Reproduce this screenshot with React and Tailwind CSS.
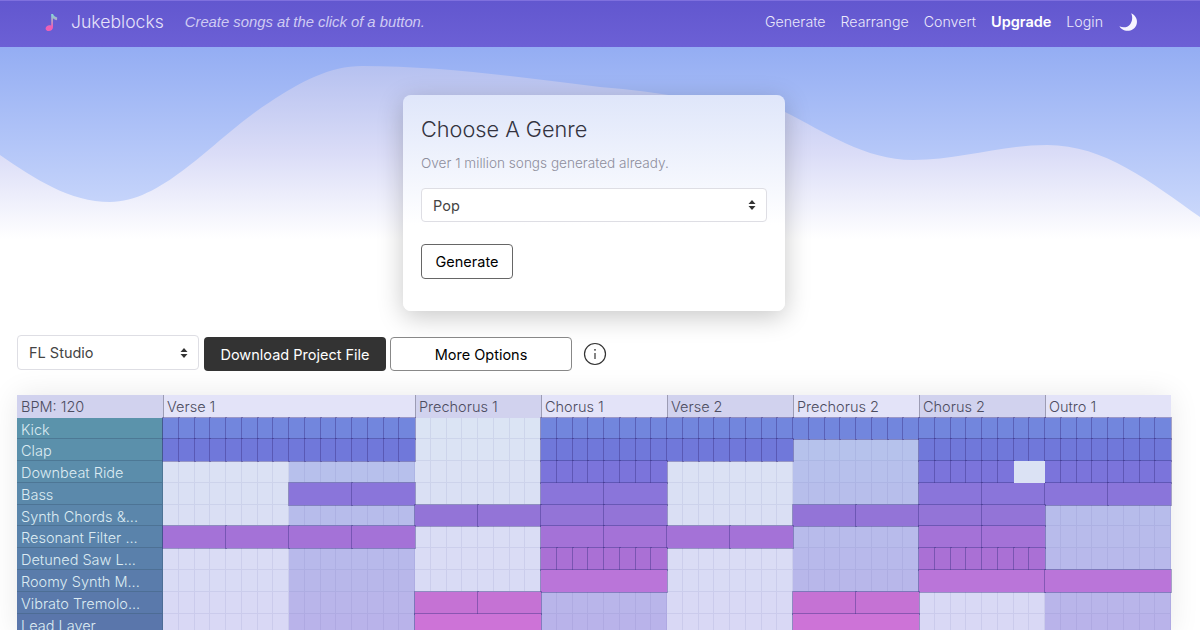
const SECTIONS = [
  { name: 'Verse 1', width: 'w-[252px]' },
  { name: 'Prechorus 1', width: 'w-[126px]' },
  { name: 'Chorus 1', width: 'w-[126px]' },
  { name: 'Verse 2', width: 'w-[126px]' },
  { name: 'Prechorus 2', width: 'w-[126px]' },
  { name: 'Chorus 2', width: 'w-[126px]' },
  { name: 'Outro 1', width: 'w-[126px]' },
]

// blocks: verse 1 a, verse 1 b, prechorus 1, chorus 1, verse 2, prechorus 2, chorus 2, outro 1
// number = active notes in the block, l = empty light, d = empty dark, g = 8 steps with last two empty
const TRACKS = [
  { name: 'Kick', color: '#7286dd', blocks: [8, 8, 'l', 8, 8, 8, 8, 8] },
  { name: 'Clap', color: '#7078da', blocks: [8, 8, 'l', 8, 8, 'd', 8, 8] },
  { name: 'Downbeat Ride', color: '#7b74db', blocks: ['l', 'd', 'l', 8, 'l', 'd', 'g', 8] },
  { name: 'Bass', color: '#8a75da', blocks: ['l', 2, 'l', 2, 'l', 'd', 2, 2] },
  { name: 'Synth Chords &...', color: '#9374d7', blocks: ['l', 'd', 2, 2, 'l', 2, 2, 'd'] },
  { name: 'Resonant Filter ...', color: '#a472d7', blocks: [2, 2, 'l', 2, 2, 'd', 2, 'd'] },
  { name: 'Detuned Saw L...', color: '#aa70d5', blocks: ['l', 'd', 'l', 8, 'l', 'd', 8, 'd'] },
  { name: 'Roomy Synth M...', color: '#ba75d9', blocks: ['l', 'd', 'l', 1, 'l', 'd', 1, 1] },
  { name: 'Vibrato Tremolo...', color: '#c572d4', blocks: ['l', 'd', 2, 'd', 'l', 2, 'l', 'd'] },
  { name: 'Lead Layer', color: '#cd73d7', blocks: ['l', 'd', 1, 'd', 'l', 1, 'l', 'd'] },
]

const mix = (from, to, t) => {
  const a = from.map((v, i) => Math.round(v + (to[i] - v) * t))
  return `rgb(${a[0]}, ${a[1]}, ${a[2]})`
}

const Arrows = () => (
  <svg className="absolute right-[11px] top-1/2 -translate-y-1/2 pointer-events-none" width="8" height="11" viewBox="0 0 8 11">
    <path d="M4 0.5 L7.5 4.5 H0.5 Z M4 10.5 L7.5 6.5 H0.5 Z" fill="#333" />
  </svg>
)

const Select = ({ value, className, selectClass = '' }) => (
  <div className={`relative ${className}`}>
    <select
      defaultValue={value}
      className={`w-full h-full appearance-none bg-white border border-[#dedee4] rounded-[4px] pl-[11px] text-[14.5px] text-[#444] font-normal outline-none ${selectClass}`}
    >
      <option>{value}</option>
    </select>
    <Arrows />
  </div>
)

const EmptyBlock = ({ color }) => (
  <div className="flex flex-1 basis-0">
    {Array.from({ length: 8 }).map((_, i) => (
      <div key={i} className="flex-1 basis-0 border-r border-b border-[#5a5aa0]/10" style={{ background: color }} />
    ))}
  </div>
)

const ActiveCell = ({ color, grow }) => (
  <div
    className="relative z-[1] basis-0"
    style={{ flexGrow: grow, background: color, boxShadow: '0 0 0 1px rgba(58, 48, 130, 0.42)' }}
  />
)

const Block = ({ value, rowT, color }) => {
  const light = mix([219, 228, 244], [217, 216, 245], rowT)
  const dark = mix([182, 196, 236], [185, 179, 234], rowT)
  if (value === 'l') return <EmptyBlock color={light} />
  if (value === 'd') return <EmptyBlock color={dark} />
  if (value === 'g') {
    return (
      <div className="flex flex-1 basis-0">
        {Array.from({ length: 6 }).map((_, i) => (
          <ActiveCell key={i} color={color} grow={1} />
        ))}
        <div className="relative z-[2] basis-0 grow-[2] flex bg-[#dbe2f4]" />
      </div>
    )
  }
  return (
    <div className="flex flex-1 basis-0">
      {Array.from({ length: value }).map((_, i) => (
        <ActiveCell key={i} color={color} grow={1} />
      ))}
    </div>
  )
}

const Track = ({ track, index }) => {
  const t = index / (TRACKS.length - 1)
  return (
    <div className="flex h-[21.8px]">
      <div
        className="w-[146px] shrink-0 pl-[4px] text-[14.5px] leading-[24px] font-light text-[#dcebf2] border-r border-b border-[#3f5f80]/50 whitespace-nowrap overflow-hidden"
        style={{ background: mix([91, 147, 171], [90, 118, 171], t) }}
      >
        {track.name}
      </div>
      {track.blocks.map((b, i) => (
        <Block key={i} value={b} rowT={t} color={track.color} />
      ))}
    </div>
  )
}

const Timeline = () => (
  <div className="mt-[24px] mx-[17px] w-[1154px] shadow-[0_0_28px_rgba(0,0,0,0.09)]">
    <div className="flex h-[22.5px] text-[14.5px] leading-[24px] font-light text-[#4c4c60] overflow-hidden">
      <div className="w-[146px] shrink-0 pl-[4px] bg-[#d1d2ee]">BPM: 120</div>
      {SECTIONS.map((s, i) => (
        <div
          key={s.name}
          className={`${s.width} shrink-0 pl-[3px] border-l border-[#9c9cb4] whitespace-nowrap ${i % 2 === 0 ? 'bg-[#e3e3f8]' : 'bg-[#d1d2ee]'}`}
        >
          {s.name}
        </div>
      ))}
    </div>
    {TRACKS.map((track, i) => (
      <Track key={track.name} track={track} index={i} />
    ))}
  </div>
)

const Logo = () => (
  <svg width="16" height="20" viewBox="0 0 16 20" className="shrink-0">
    <defs>
      <linearGradient id="note" x1="0" y1="1" x2="0" y2="0">
        <stop offset="0.25" stopColor="#ef5fb4" />
        <stop offset="1" stopColor="#7fe0d8" />
      </linearGradient>
    </defs>
    <path
      d="M7.2 2 L9 2 C9.4 4 11.5 5 13.2 5.4 L13 8.2 C11.4 7.9 10 7.2 9 6.2 L9 15.2 C9 17.6 7 19 4.8 19 C2.8 19 1.6 17.9 1.6 16.4 C1.6 14.6 3.6 13.2 5.4 13.2 C6 13.2 6.7 13.3 7.2 13.6 Z"
      fill="url(#note)"
    />
  </svg>
)

const Moon = () => (
  <svg width="20" height="20" viewBox="0 0 20 20" className="shrink-0">
    <path d="M13.2 1.2 C18.4 3.6 20 8.6 18.4 13 C16.6 17.6 11.4 19.8 6.8 18.4 C4.4 17.7 2.4 16.2 1.4 14.2 C5.2 16.2 9.6 15.4 12 12.4 C14.6 9.2 14.8 4.8 13.2 1.2 Z" fill="#f7f5ff" />
  </svg>
)

const Nav = () => (
  <nav className="relative z-10 h-[47px] flex items-center pb-[4px] pl-[44px] pr-[62px] border-t border-[#7f70de] bg-gradient-to-b from-[#6257cf] to-[#6c60d5]">
    <Logo />
    <span className="ml-[11px] text-[17.6px] font-light text-[#e6e3fa]">Jukeblocks</span>
    <span className="ml-[21px] text-[14.8px] font-light italic text-[#cfcbf3] font-['Liberation_Sans',sans-serif]">
      Create songs at the click of a button.
    </span>
    <div className="ml-auto flex items-center gap-[15px] text-[14.2px] font-light text-[#ebe9fb]">
      <span>Generate</span>
      <span>Rearrange</span>
      <span>Convert</span>
      <span className="text-[14.5px] font-semibold text-white">Upgrade</span>
      <span>Login</span>
      <Moon />
    </div>
  </nav>
)

const Hero = () => (
  <div className="absolute left-0 right-0 top-[47px] h-[200px] bg-gradient-to-b from-[#94adf3] to-[#d4dffc]">
    <svg width="1200" height="200" viewBox="0 0 1200 200" className="block">
      <defs>
        <linearGradient id="wave" gradientUnits="userSpaceOnUse" x1="0" y1="19" x2="0" y2="192">
          <stop offset="0" stopColor="#b6c1f0" />
          <stop offset="0.5" stopColor="#dadcf7" />
          <stop offset="1" stopColor="#ffffff" />
        </linearGradient>
      </defs>
      <path
        d="M0 108 C35 132 70 155 110 155 C165 155 215 90 270 55 C300 35 330 19 362 19 C440 19 520 30 600 40 C670 45 725 60 785 65 C825 85 865 113 913 113 C960 113 1000 98 1047 98 C1105 98 1150 135 1200 170 L1200 200 L0 200 Z"
        fill="url(#wave)"
      />
    </svg>
  </div>
)

const GenreCard = () => (
  <div className="relative z-[1] ml-[403px] mt-[48px] w-[382px] h-[216px] p-[18px] rounded-[8px] bg-gradient-to-b from-[#dfe6fa] to-white to-60% shadow-[0_6px_26px_rgba(0,0,0,0.22)]">
    <h1 className="text-[21.7px] leading-[32px] font-light text-[#33333f]">Choose A Genre</h1>
    <p className="mt-[8px] text-[13.6px] leading-[20px] font-light text-[#8e8e9c]">Over 1 million songs generated already.</p>
    <Select value="Pop" className="mt-[15px] h-[34px]" selectClass="pt-[2px]" />
    <button className="mt-[22px] w-[92px] h-[35px] bg-white border border-[#666] rounded-[4px] text-[14.5px] text-black">
      Generate
    </button>
  </div>
)

const Toolbar = () => (
  <div className="relative z-[2] mt-[24px] mx-[17px] h-[36px] flex items-start">
    <Select value="FL Studio" className="w-[182px] h-[35px]" />
    <button className="ml-[5px] mt-[2px] w-[182px] h-[34px] pt-[1px] bg-[#333] rounded-[4px] text-[14.5px] text-white">
      Download Project File
    </button>
    <button className="ml-[4px] mt-[2px] w-[182px] h-[34px] pt-[1px] bg-white border border-[#888] rounded-[4px] text-[14.5px] text-black">
      More Options
    </button>
    <svg width="24" height="24" viewBox="0 0 24 24" fill="none" className="ml-[11px] mt-[7px]">
      <circle cx="12" cy="12" r="10.5" stroke="#333" strokeWidth="1.2" />
      <circle cx="12" cy="7.8" r="0.9" fill="#333" />
      <path d="M12 11 V17" stroke="#333" strokeWidth="1.2" />
    </svg>
  </div>
)

export default function App() {
  return (
    <div className="relative w-[1200px] h-[630px] overflow-hidden bg-white font-['Inter',sans-serif]">
      <Nav />
      <Hero />
      <GenreCard />
      <Toolbar />
      <Timeline />
    </div>
  )
}
